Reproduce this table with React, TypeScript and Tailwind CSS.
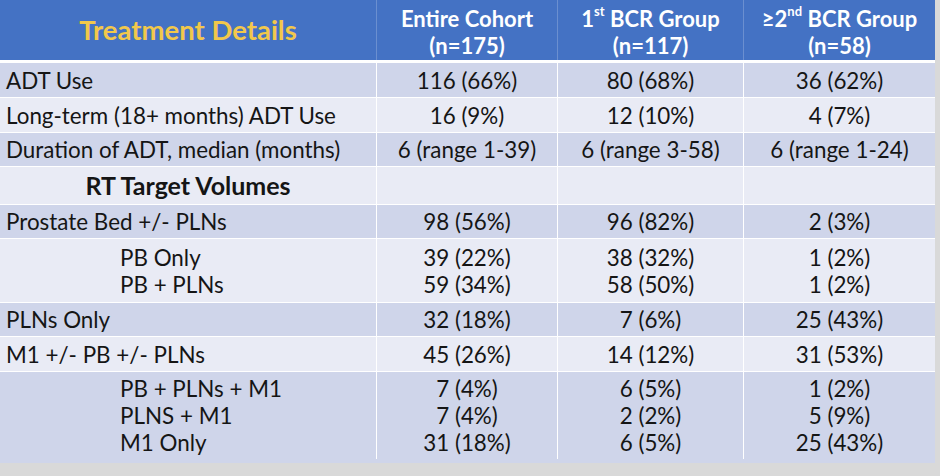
const FONT = { fontFamily: "Lato, 'Open Sans', sans-serif" };

const COLS = "grid grid-cols-[377px_181px_186px_191px]";

type Row = {
  label: string[];
  values: string[][];
  dark: boolean;
  indent?: boolean;
  h: string;
};

const ROWS: Row[] = [
  { label: ["ADT Use"], values: [["116 (66%)"], ["80 (68%)"], ["36 (62%)"]], dark: true, h: "h-[35px]" },
  { label: ["Long-term (18+ months) ADT Use"], values: [["16 (9%)"], ["12 (10%)"], ["4 (7%)"]], dark: false, h: "h-[35px]" },
  { label: ["Duration of ADT, median (months)"], values: [["6 (range 1-39)"], ["6 (range 3-58)"], ["6 (range 1-24)"]], dark: true, h: "h-[34px]" },
];

const ROWS2: Row[] = [
  { label: ["Prostate Bed +/- PLNs"], values: [["98 (56%)"], ["96 (82%)"], ["2 (3%)"]], dark: true, h: "h-[34px]" },
  { label: ["PB Only", "PB + PLNs"], values: [["39 (22%)", "59 (34%)"], ["38 (32%)", "58 (50%)"], ["1 (2%)", "1 (2%)"]], dark: false, indent: true, h: "h-[64px]" },
  { label: ["PLNs Only"], values: [["32 (18%)"], ["7 (6%)"], ["25 (43%)"]], dark: true, h: "h-[34px]" },
  { label: ["M1 +/- PB +/- PLNs"], values: [["45 (26%)"], ["14 (12%)"], ["31 (53%)"]], dark: false, h: "h-[35px]" },
  {
    label: ["PB + PLNs + M1", "PLNS + M1", "M1 Only"],
    values: [["7 (4%)", "7 (4%)", "31 (18%)"], ["6 (5%)", "2 (2%)", "6 (5%)"], ["1 (2%)", "5 (9%)", "25 (43%)"]],
    dark: true,
    indent: true,
    h: "h-[92px] pb-[4px]",
  },
];

function DataRow({ row }: { row: Row }) {
  const bg = row.dark ? "bg-[#cfd5ea]" : "bg-[#e9ebf5]";
  return (
    <div className={`${COLS} ${row.h} ${bg} border-t border-white`}>
      <div className={`flex flex-col justify-center border-r border-white ${row.indent ? "pl-[120px]" : "pl-[6px]"}`}>
        {row.label.map((l) => (
          <div key={l} className="leading-[27px]">{l}</div>
        ))}
      </div>
      {row.values.map((col, i) => (
        <div key={i} className={`flex flex-col justify-center items-center ${i < 2 ? "border-r border-white" : ""}`}>
          {col.map((v, j) => (
            <div key={j} className="leading-[27px]">{v}</div>
          ))}
        </div>
      ))}
    </div>
  );
}

export default function App() {
  return (
    <div className="w-[940px] h-[476px] bg-[#d9d9d9] overflow-hidden text-[22.4px] text-[#151515]" style={FONT}>
      <div className="w-[935px]">
        {/* header */}
        <div className={`${COLS} h-[62px] bg-[#4472c4] border-b-2 border-white font-bold text-white text-[22px] leading-[27px]`}>
          <div className="flex items-center justify-center border-r border-[#6b8fd0] text-[#f2c84b] text-[27.5px] pb-[2px]">
            Treatment Details
          </div>
          <div className="flex flex-col items-center justify-center pt-[3px] border-r border-[#6b8fd0]">
            <div>Entire Cohort</div>
            <div>(n=175)</div>
          </div>
          <div className="flex flex-col items-center justify-center pt-[3px] border-r border-[#6b8fd0]">
            <div>
              1<sup className="text-[13px] align-[4px]">st</sup> BCR Group
            </div>
            <div>(n=117)</div>
          </div>
          <div className="flex flex-col items-center justify-center pt-[3px]">
            <div>
              ≥2<sup className="text-[13px] align-[4px]">nd</sup> BCR Group
            </div>
            <div>(n=58)</div>
          </div>
        </div>

        {ROWS.map((r) => (
          <DataRow key={r.label[0]} row={r} />
        ))}

        <div className={`${COLS} h-[38px] bg-[#e9ebf5] border-t border-white`}>
          <div className="flex items-center justify-center font-bold text-[25px] border-r border-white">
            RT Target Volumes
          </div>
          <div className="border-r border-white" />
          <div className="border-r border-white" />
          <div />
        </div>

        {ROWS2.map((r) => (
          <DataRow key={r.label[0]} row={r} />
        ))}
      </div>
    </div>
  );
}
